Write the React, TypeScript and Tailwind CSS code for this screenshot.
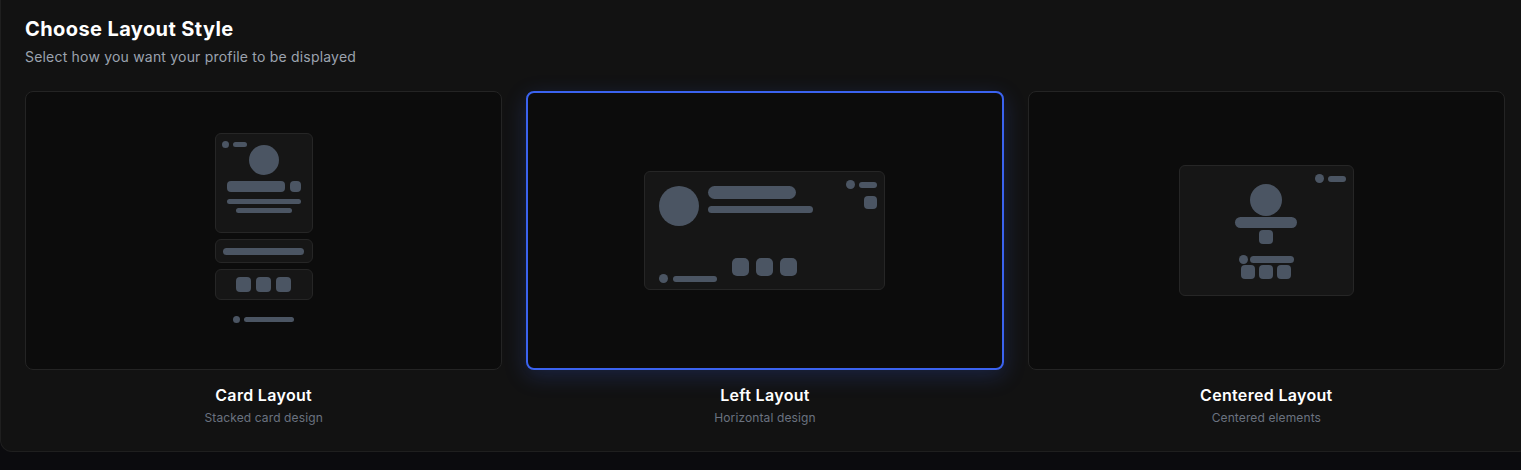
const Bar = ({ className }: { className: string }) => (
  <div className={`rounded-full bg-[#4b5563] ${className}`} />
);

const Sq = ({ className }: { className: string }) => (
  <div className={`bg-[#4b5563] ${className}`} />
);

const boxCls = "rounded-md border border-[#262626] bg-[#161616]";

const CardPreview = () => (
  <div className="mb-[5px] flex flex-col items-center">
    <div className="flex w-[98px] flex-col gap-[6px]">
      <div className={`${boxCls} relative flex h-[100px] flex-col items-center pt-[11px]`}>
        <div className="absolute left-[6px] top-[7px] flex items-center gap-[4px]">
          <Bar className="h-[7px] w-[7px]" />
          <Bar className="h-[5px] w-[14px]" />
        </div>
        <Bar className="h-[30px] w-[30px]" />
        <div className="mt-[6px] flex items-center gap-[5px]">
          <Sq className="h-[11px] w-[58px] rounded-[4px]" />
          <Sq className="h-[11px] w-[11px] rounded-[4px]" />
        </div>
        <Bar className="mt-[7px] h-[5px] w-[74px]" />
        <Bar className="mt-[4px] h-[5px] w-[56px]" />
      </div>
      <div className={`${boxCls} flex h-[24px] items-center justify-center`}>
        <Bar className="h-[7px] w-[81px]" />
      </div>
      <div className={`${boxCls} flex h-[31px] items-center justify-center gap-[5px]`}>
        <Sq className="h-[15px] w-[15px] rounded-[4px]" />
        <Sq className="h-[15px] w-[15px] rounded-[4px]" />
        <Sq className="h-[15px] w-[15px] rounded-[4px]" />
      </div>
    </div>
    <div className="mt-[16px] flex items-center gap-[4px]">
      <Bar className="h-[7px] w-[7px]" />
      <Bar className="h-[5px] w-[50px]" />
    </div>
  </div>
);

const LeftPreview = () => (
  <div className={`${boxCls} relative flex h-[119px] w-[241px] flex-col justify-between px-[14px] pb-[6px] pt-[14px]`}>
    <div className="absolute right-[7px] top-[8px] flex flex-col items-end">
      <div className="flex items-center gap-[4px]">
        <Bar className="h-[9px] w-[9px]" />
        <Bar className="h-[6px] w-[18px]" />
      </div>
      <Sq className="mt-[7px] h-[13px] w-[13px] rounded-[4px]" />
    </div>
    <div className="flex items-start gap-[9px]">
      <Bar className="h-[40px] w-[40px]" />
      <div className="flex flex-col">
        <Bar className="h-[13px] w-[88px]" />
        <Bar className="mt-[7px] h-[7px] w-[105px]" />
      </div>
    </div>
    <div className="grid grid-cols-3 items-end">
      <div className="flex items-center gap-[5px]">
        <Bar className="h-[9px] w-[9px]" />
        <Bar className="h-[6px] w-[44px]" />
      </div>
      <div className="mb-[7px] flex justify-center gap-[7px]">
        <Sq className="h-[18px] w-[17px] rounded-[5px]" />
        <Sq className="h-[18px] w-[17px] rounded-[5px]" />
        <Sq className="h-[18px] w-[17px] rounded-[5px]" />
      </div>
      <div />
    </div>
  </div>
);

const CenteredPreview = () => (
  <div className={`${boxCls} relative flex h-[131px] w-[175px] flex-col items-center justify-center pt-[1px]`}>
    <div className="absolute right-[7px] top-[8px] flex items-center gap-[4px]">
      <Bar className="h-[9px] w-[9px]" />
      <Bar className="h-[6px] w-[18px]" />
    </div>
    <Bar className="h-[32px] w-[32px]" />
    <Bar className="mt-[1px] h-[11px] w-[62px]" />
    <Sq className="mt-[2px] h-[14px] w-[14px] rounded-[4px]" />
    <div className="mt-[11px] flex items-center gap-[2px]">
      <Bar className="h-[9px] w-[9px]" />
      <Bar className="h-[7px] w-[44px]" />
    </div>
    <div className="mt-[1px] flex gap-[4px]">
      <Sq className="h-[14px] w-[14px] rounded-[4px]" />
      <Sq className="h-[14px] w-[14px] rounded-[4px]" />
      <Sq className="h-[14px] w-[14px] rounded-[4px]" />
    </div>
  </div>
);

const options = [
  { id: "card", title: "Card Layout", sub: "Stacked card design", preview: <CardPreview /> },
  { id: "left", title: "Left Layout", sub: "Horizontal design", preview: <LeftPreview /> },
  { id: "centered", title: "Centered Layout", sub: "Centered elements", preview: <CenteredPreview /> },
];

export default function App() {
  const selected = "left";
  return (
    <div
      className="h-[470px] w-full overflow-hidden bg-[#0b0b0e]"
      style={{ fontFamily: "Inter, 'Noto Sans', sans-serif" }}
    >
      <div className="w-[1530px] rounded-b-xl border-x border-b border-[#1f1f1f] bg-[#121212] px-6 pb-[25px] pt-[15px]">
        <h2 className="text-xl font-bold leading-7 tracking-[0.02em] text-white">Choose Layout Style</h2>
        <p className="mt-1 text-sm tracking-[0.014em] text-[#9ca3af]">Select how you want your profile to be displayed</p>

        <div className="mt-6 grid grid-cols-3 gap-6">
          {options.map((o) => (
            <div key={o.id} className="flex flex-col items-center">
              <div
                className={
                  o.id === selected
                    ? "flex h-[279px] w-full items-center justify-center rounded-lg border-2 border-[#3b63f0] bg-[#0c0c0c] shadow-[0_6px_22px_rgba(59,99,240,0.22)]"
                    : "flex h-[279px] w-full items-center justify-center rounded-lg border border-[#242424] bg-[#0c0c0c]"
                }
              >
                {o.preview}
              </div>
              <h3 className="mt-[13px] text-base font-semibold tracking-[0.02em] text-white">{o.title}</h3>
              <p className="mt-[3px] text-xs tracking-[0.01em] text-[#6b7280]">{o.sub}</p>
            </div>
          ))}
        </div>
      </div>
    </div>
  );
}
